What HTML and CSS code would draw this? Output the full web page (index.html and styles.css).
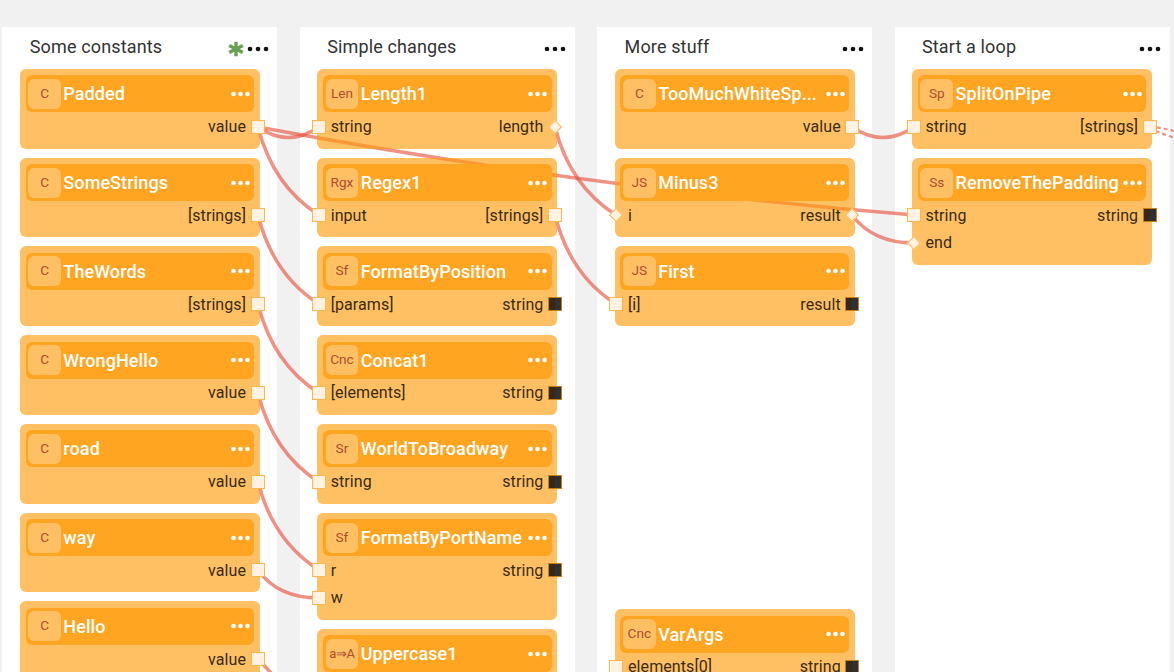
FILE: index.html
```
<!DOCTYPE html>
<html lang="en">
<head>
<meta charset="utf-8">
<title>Flow editor</title>
<link rel="stylesheet" href="styles.css">
</head>
<body>
<main class="board" id="board"></main>
<script src="app.js"></script>
</body>
</html>
```
FILE: styles.css
```
* { box-sizing: border-box; }
body { margin: 0; background: #f1f1f1; font-family: Roboto, sans-serif; overflow: hidden; }
.board { position: relative; display: flex; gap: 22.4px; width: 1174px; height: 672px; padding: 26.7px 0 0 2.4px; overflow: hidden; }
.column { flex: 0 0 275px; height: 660px; background: #fff; }
.column-head { display: flex; align-items: center; height: 42.3px; padding: 0 8.4px 3px 27.4px; }
.column-title { flex: 1; font-size: 18px; letter-spacing: .14px; color: #333; white-space: nowrap; }
.star { width: 16px; height: 16px; margin: 6px 3px 0 0; }
.dots { width: 22px; height: 6px; margin-top: 6px; }
.cards { position: relative; z-index: 1; display: flex; flex-direction: column; gap: 9px; padding-left: 17.6px; }
.card { width: 240px; height: 79.75px; flex: none; border-radius: 6px; background: rgba(255, 155, 10, .63); padding: 6.3px 5.7px; }
.card-tall { height: 107.1px; }
.card-offset { margin-top: 274.1px; }
.card-head { display: flex; align-items: center; height: 37px; border-radius: 6px; background: #ffa521; padding: 0 4.5px 0 2.5px; }
.badge { flex: none; width: 32.8px; height: 30px; border-radius: 6px; background: #ffc063; color: #b04e33; font-size: 13.6px; line-height: 29.6px; text-align: center; white-space: nowrap; }
.badge-small { font-size: 13px; letter-spacing: -.3px; }
.card-title { flex: 1; min-width: 0; margin: 0 2.5px 0 2.4px; color: #fff; font-size: 18px; font-weight: 500; letter-spacing: .08px; white-space: nowrap; }
.card-dots { flex: none; width: 19px; height: 6px; }
.ports { display: flex; justify-content: space-between; margin: .6px -10.3px 0 -11px; }
.port-list { display: flex; flex-direction: column; }
.port { display: flex; align-items: center; gap: 4.6px; height: 27.4px; color: #3a2b14; font-size: 16px; letter-spacing: .08px; white-space: nowrap; }
.pin { width: 14px; height: 14px; flex: none; border: 1px solid #ffb74d; background: #fff2e2; }
.pin-number { width: 10px; height: 10px; margin: 2px; transform: rotate(45deg); }
.pin-open { background: linear-gradient(90deg, #352817 50%, #303033 50%); border-color: #c78018; }
.wires { position: absolute; left: 0; top: 0; width: 1174px; height: 672px; fill: none; stroke: #e84e38; stroke-opacity: .62; stroke-width: 3.5; pointer-events: none; }
.wire-dashed { stroke-dasharray: 4 3; stroke-width: 2.2; }
```
FILE: app.js
```
const columns = [
  { title: "Some constants", starred: true, cards: [
    ["C", "Padded", [], ["value"]], ["C", "SomeStrings", [], ["[strings]"]],
    ["C", "TheWords", [], ["[strings]"]], ["C", "WrongHello", [], ["value"]],
    ["C", "road", [], ["value"]], ["C", "way", [], ["value"]], ["C", "Hello", [], ["value"]] ] },
  { title: "Simple changes", cards: [
    ["Len", "Length1", ["string"], ["#length"]], ["Rgx", "Regex1", ["input"], ["[strings]"]],
    ["Sf", "FormatByPosition", ["[params]"], ["!string"]], ["Cnc", "Concat1", ["[elements]"], ["!string"]],
    ["Sr", "WorldToBroadway", ["string"], ["!string"]], ["Sf", "FormatByPortName", ["r", "w"], ["!string"]],
    ["a⇒A", "Uppercase1", [], []] ] },
  { title: "More stuff", cards: [
    ["C", "TooMuchWhiteSp...", [], ["value"]], ["JS", "Minus3", ["#i"], ["#result"]],
    ["JS", "First", ["[i]"], ["!result"]], ["Cnc", "VarArgs", ["elements[0]"], ["!string"], "card-offset"] ] },
  { title: "Start a loop", cards: [
    ["Sp", "SplitOnPipe", ["string"], ["[strings]"]],
    ["Ss", "RemoveThePadding", ["string", "#end"], ["!string"]] ] }
];

const dots = (cls, color, w, step, r) =>
  `<svg class="${cls}" viewBox="0 0 ${w} 6" fill="${color}">${[-1, 0, 1].map(k => `<circle cx="${w / 2 + k * step}" cy="3" r="${r}"/>`).join("")}</svg>`;
const star = `<svg class="star" viewBox="0 0 16 16" stroke="#6a9f56" stroke-width="3.4"><path d="M8 .8v14.4M1.2 4.4l13.6 7.2M1.2 11.6l13.6-7.2"/></svg>`;

function port(spec, isOutput) {
  const kind = spec[0] === "#" ? " pin-number" : spec[0] === "!" ? " pin-open" : "";
  const pin = `<i class="pin${kind}"></i>`;
  const label = `<span>${spec.replace(/^[#!]/, "")}</span>`;
  return `<div class="port">${isOutput ? label + pin : pin + label}</div>`;
}

function card([badge, title, inputs, outputs, extra = ""]) {
  const portList = (specs, isOutput) => `<div class="port-list">${specs.map(p => port(p, isOutput)).join("")}</div>`;
  return `<article class="card ${inputs.length > 1 ? "card-tall" : ""} ${extra}">
    <header class="card-head"><span class="badge ${badge.includes("⇒") ? "badge-small" : ""}">${badge}</span><span class="card-title">${title}</span>${dots("card-dots", "#fff", 19, 7, 2.3)}</header>
    <div class="ports">${portList(inputs, false)}${portList(outputs, true)}</div>
  </article>`;
}

const wires = `<svg class="wires" viewBox="0 0 1174 672">
  <path d="M258 127Q288 148 319 127"/>
  <path d="M258 127Q586 188 914 215"/>
  <path d="M258 127Q273 186 319 215"/>
  <path d="M258 215Q273 275 319 304"/>
  <path d="M258 304Q273 364 319 393"/>
  <path d="M258 393Q273 453 319 482"/>
  <path d="M258 482Q273 541 319 570"/>
  <path d="M258 570Q278 598 319 598"/>
  <path d="M258 659Q270 672 282 684"/>
  <path d="M555 127Q570 186 616 215"/>
  <path d="M555 215Q570 275 616 304"/>
  <path d="M852 127Q883 148 914 127"/>
  <path d="M852 215Q873 243 914 243"/>
  <path class="wire-dashed" d="M1150 126L1190 134M1150 127Q1166 138 1190 140"/>
</svg>`;

document.getElementById("board").innerHTML = wires + columns.map(c => `<section class="column">
  <header class="column-head"><span class="column-title">${c.title}</span>${c.starred ? star : ""}${dots("dots", "#111", 22, 8, 2.3)}</header>
  <div class="cards">${c.cards.map(card).join("")}</div></section>`).join("");
```
